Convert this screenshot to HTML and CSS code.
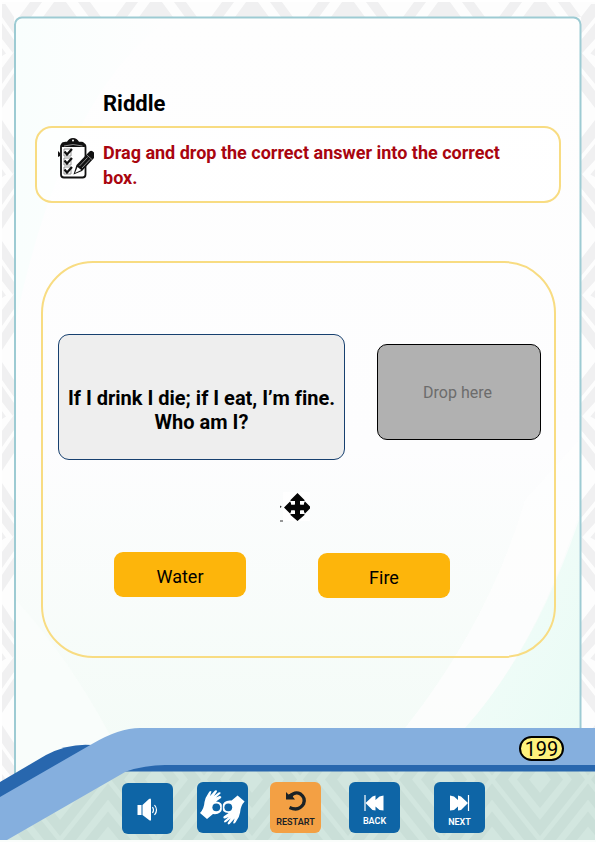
FILE: index.html
```html
<!DOCTYPE html>
<html lang="en">
<head>
<meta charset="utf-8">
<title>Riddle</title>
<link rel="stylesheet" href="styles.css">
</head>
<body>
<div class="page">
  <svg class="backdrop" viewBox="0 0 596 842" aria-hidden="true">
    <defs>
      <pattern id="weaveTop" width="96" height="16" patternUnits="userSpaceOnUse" x="12" y="2">
        <path fill="#f0f0f1" d="M42 0H54L65 15H31ZM66 0H78L89 15H77ZM30 0H18L7 15H19Z"/>
      </pattern>
      <pattern id="weaveSide" width="12" height="121" patternUnits="userSpaceOnUse" x="2" y="-7">
        <path id="chevrons" fill="#f0f0f1" d="M0 6L12 24V41L0 24ZM0 30L12 47V58L11 60L0 46ZM0 55L4 60.500L0 63ZM0 75L12 59V74L0 91ZM0 98L12 80V97L0 115Z"/>
      </pattern>
      <pattern id="weaveSideRight" width="14" height="121" patternUnits="userSpaceOnUse" x="581" y="-7">
        <use href="#chevrons" transform="translate(14 0) scale(-1.160 1)"/>
      </pattern>
      <pattern id="weaveGreen" width="96" height="121" patternUnits="userSpaceOnUse" x="12" y="-7">
        <rect width="96" height="121" fill="#d2e6df"/>
        <path id="diamond" fill="#cadfd8" fill-rule="evenodd" d="M48 4L93 60.500L48 117L3 60.500ZM48 20L16 60.500L48 101L80 60.500ZM48 32L71 60.500L48 89L25 60.500ZM48 47L37 60.500L48 74L59 60.500Z"/>
        <use href="#diamond" x="-48" y="-60.500"/>
        <use href="#diamond" x="48" y="-60.500"/>
        <use href="#diamond" x="-48" y="60.500"/>
        <use href="#diamond" x="48" y="60.500"/>
      </pattern>
      <linearGradient id="sheet" x1="0" y1="0" x2="0" y2="1">
        <stop offset="0" stop-color="#fefefe"/>
        <stop offset=".55" stop-color="#fdfdfe"/>
        <stop offset="1" stop-color="#f2fbf6"/>
      </linearGradient>
      <linearGradient id="mint" x1="0" y1="0" x2="1" y2="1">
        <stop offset="0" stop-color="#f5fdfa"/>
        <stop offset="1" stop-color="#e9fbf5"/>
      </linearGradient>
      <linearGradient id="corner" x1="0" y1="0" x2="1" y2="0">
        <stop offset="0" stop-color="#f9fefd"/>
        <stop offset="1" stop-color="#fefefe"/>
      </linearGradient>
    </defs>
    <rect width="596" height="842" fill="#fff"/>
    <rect x="2" y="2" width="593" height="838" fill="#fdfdfd"/>
    <rect x="12" y="2" width="583" height="15" fill="url(#weaveTop)"/>
    <rect x="2" y="4" width="12" height="790" fill="url(#weaveSide)"/>
    <rect x="581" y="4" width="14" height="750" fill="url(#weaveSideRight)"/>
    <rect x="15" y="17.500" width="565" height="780" rx="7" fill="url(#sheet)"/>
    <path d="M16 25Q16 19 22 19H170Q65 90 16 320Z" fill="url(#corner)"/>
    <path d="M579 520Q535 650 465 728H579Z" fill="url(#mint)"/>
    <path d="M525 500Q490 620 405 728H465Q535 650 579 515V440Z" fill="#fdfefe" opacity=".75"/>
    <path d="M16 600Q70 660 110 735L16 790Z" fill="#fbfefc" opacity=".7"/>
    <rect x="15" y="17.500" width="565.500" height="780" rx="7" fill="none" stroke="#9dcbd3" stroke-width="2"/>
    <path d="M0 840V790L110 740L595 760V840Z" fill="url(#weaveGreen)"/>
    <path d="M0 782L46 755Q69 743 92 745L110 760L0 820Z" fill="#2867ae"/>
    <path d="M110 771.500H595V760H150Z" fill="#2867ae"/>
    <path d="M0 797L92 744Q119 728 140 728H595V765H165Q145 765 126 771.500L7 840H0Z" fill="#85afde"/>
    <path d="M0 840H596V842H0Z" fill="#fafdfb"/>
  </svg>

  <main class="content">
    <h1 class="title">Riddle</h1>
    <section class="instruction">
      <svg class="checklist" viewBox="0 0 38 42" aria-hidden="true">
        <rect x="3" y="6" width="24.500" height="33.500" rx="3" fill="#fff" stroke="#111" stroke-width="1.800"/>
        <path d="M3.500 9V5.500Q4 3.800 7.500 3.800H9Q11 0 15 0T21 3.800H23.500Q27 3.800 27 9Z" fill="#111"/>
        <circle cx="15" cy="2.500" r="1" fill="#fff"/>
        <path d="M6 8Q15 5 24.500 8" fill="none" stroke="#aaa" stroke-width=".8"/>
        <path d="M0 13L2 15V18L0 19Z" fill="#111"/>
        <path d="M6 11H13V18H6ZM6 20H13V27H6ZM6 29H13V36H6Z" fill="none" stroke="#888" stroke-width=".9"/>
        <path d="M6.500 13.500L9 16.500L14 11M6.500 22.500L9 25.500L14 20M6.500 31.500L9 34.500L14 29" fill="none" stroke="#111" stroke-width="2.200"/>
        <path d="M15.500 36.500L18.500 27L30.500 14.500Q33 11 36 14.500V20L24 33Z" fill="#111"/>
        <path d="M17 35L19.500 29L23.300 32Z" fill="#fff"/>
        <path d="M21.500 28L29.500 19.500M24 30L32 21.500M28.800 17L34 21.500" stroke="#ddd" stroke-width=".6"/>
      </svg>
      <p class="instruction-text">Drag and drop the correct answer into the correct<br>box.</p>
    </section>

    <section class="board">
      <div class="row">
        <div class="question"><p>If I drink I die; if I eat, I’m fine.<br>Who am I?</p></div>
        <div class="drop">Drop here</div>
      </div>
      <svg class="move" viewBox="0 0 32 32" aria-hidden="true">
        <path d="M3 0H30V29H3Z" fill="#fff"/>
        <path d="M17.500 1L24.500 8V9H20V12.500H24V8.500L30 14.500V16.500L24 22.500V18.500H20V22H24.500V23L17.500 29L10.500 23V22H15V18.500H11V22.500L4 15.500L11 8.500V12.500H15V9H10.500V8Z" fill="#050505"/>
        <path d="M10 9H14.500V12.500H11.500ZM20.500 9H25L23.500 12.500H20.500ZM11.500 18.500H14.500V22H10ZM20.500 18.500H23.500L25 22H20.500Z" fill="#fff"/>
        <path d="M0 13.500L1.800 14.700L0 16ZM0 28.500H3V29.500H0Z" fill="#333"/>
      </svg>
      <div class="answers">
        <button class="answer">Water</button>
        <button class="answer answer-low">Fire</button>
      </div>
    </section>
  </main>

  <div class="page-line"><span class="page-number">199</span></div>

  <nav class="toolbar">
    <button class="tool tool-sound" aria-label="Sound">
      <svg viewBox="0 0 51 51"><path d="M15.500 22H19.500V32H15.500ZM20.500 22L27 16Q29 14.500 29 17V36.500Q29 38.500 27 37L20.500 32Z" fill="#fff"/><path d="M30.500 24Q32.500 27 30.500 30M32.500 22Q36.500 27 32.500 32" fill="none" stroke="#fff" stroke-width="1.200"/></svg>
    </button>
    <button class="tool tool-sign" aria-label="Sign language">
      <svg viewBox="0 0 51 51">
        <g id="hand">
          <path d="M3 31Q7 27 7.500 20Q8 16 11.500 11Q13 8 14.500 9.500L13 14L18 8.500Q20 7.500 20 9.500L17 14L21.500 10.500Q24 9.500 23.500 11.500L19 15.500L22.500 14Q25 14 24 16L19 19.500Q26 20 25.500 26Q24 33 16 32L10 37Z" fill="#fff"/>
          <circle cx="19.300" cy="25.300" r="3.900" fill="#0e65a6"/>
        </g>
        <use href="#hand" transform="rotate(180 25.300 25.300)"/>
        <path d="M25.300 18V32" stroke="#0e65a6" stroke-width="1"/>
      </svg>
    </button>
    <button class="tool tool-restart">
      <svg viewBox="0 0 51 51"><path d="M20.500 14Q25 9 30.500 12Q36 16 33.500 22Q29 29.500 19.500 25.500" fill="none" stroke="#1b2226" stroke-width="3.400"/><path d="M16 10L18.500 12.500L22 11L23 15L25 17.500H16Z" fill="#1b2226"/></svg>
      <span>RESTART</span>
    </button>
    <button class="tool tool-back">
      <svg viewBox="0 0 51 51"><path d="M16 13V29" stroke="#fff" stroke-width="1.200"/><path d="M16.500 21L23.500 14.500L26.500 13.500V18L30.500 14.500L34.500 13.500V28.500L30.500 28L26.500 24.500V28.500L23.500 28Z" fill="#fff"/></svg>
      <span>BACK</span>
    </button>
    <button class="tool tool-next">
      <svg viewBox="0 0 51 51"><path d="M34.500 13V29" stroke="#fff" stroke-width="1.200"/><path d="M34 21L27 14.500L24 13.500V18L20 14.500L16 13.500V28.500L20 28L24 24.500V28.500L27 28Z" fill="#fff"/></svg>
      <span>NEXT</span>
    </button>
  </nav>
</div>
</body>
</html>
```
FILE: styles.css
```css
* { box-sizing: border-box; }
body { margin: 0; background: #fff; font-family: Roboto, "Liberation Sans", sans-serif; font-variant-ligatures: none; color: #000; }
h1, p { margin: 0; }
button { border: 0; padding: 0; font-family: inherit; }

.page { position: relative; width: 596px; height: 842px; overflow: hidden; display: flex; flex-direction: column; }
.backdrop { position: absolute; inset: 0; width: 596px; height: 842px; }
.content { position: relative; height: 728px; padding: 90px 40px 0 35px; display: flex; flex-direction: column; }

.title { margin-left: 68px; height: 36px; font-size: 22px; line-height: 27px; font-weight: 700; }
.instruction { width: 526px; height: 77px; padding: 11px 0 0 21px; display: flex; align-items: flex-start; border: 2px solid #f8dc82; border-radius: 17px; background: rgba(255, 255, 255, .5); }
.checklist { width: 38px; height: 42px; margin-top: -1px; }
.instruction-text { margin-left: 7px; margin-top: 1px; color: #a9050f; font-size: 18px; line-height: 25px; font-weight: 700; white-space: nowrap; }

.board { width: 515px; height: 397px; margin: 58px 0 0 6px; padding: 71px 13px 0 15px; display: flex; flex-direction: column; border: 2px solid #f8dc82; border-radius: 52px; }
.row { display: flex; justify-content: space-between; align-items: flex-start; }
.question { width: 287px; height: 126px; padding-top: 51px; border: 1px solid #17406f; border-radius: 11px; background: #eeeeee; text-align: center; font-size: 20px; line-height: 24px; font-weight: 700; white-space: nowrap; }
.question p { margin: 0 -10px; }
.drop { width: 164px; height: 96px; margin-top: 10px; padding-right: 3px; border: 1px solid #000; border-radius: 10px; background: #b1b1b1; color: #6c6c6c; display: flex; align-items: center; justify-content: center; font-size: 16px; }
.move { width: 32px; height: 32px; margin: 32px 0 0 222px; }
.answers { display: flex; gap: 72px; margin: 28px 0 0 56px; }
.answer { width: 132px; height: 45px; padding-top: 4px; border-radius: 9px; background: #fdb50b; color: #000; font-size: 18px; }
.answer-low { margin-top: 1px; }

.page-line { position: relative; height: 37px; padding: 8px 32px 0 0; display: flex; justify-content: flex-end; }
.page-number { width: 45px; height: 25px; border: 2px solid #000; border-radius: 13px; background: #fff27d; font-size: 20px; line-height: 22px; text-align: center; }
.toolbar { position: relative; padding: 17px 0 0 122px; display: flex; align-items: flex-start; }
.tool { width: 51px; height: 51px; border-radius: 6px; background: #0e65a6; color: #fff; display: grid; font-size: 9px; overflow: hidden; }
.tool svg, .tool span { grid-area: 1 / 1; }
.tool svg { width: 51px; height: 51px; }
.tool span { align-self: end; justify-self: center; line-height: 11px; margin-bottom: 5px; font-weight: 600; }
.tool-sound { margin-top: 1px; }
.tool-sign { margin-left: 24px; }
.tool-restart { margin-left: 22px; background: #f3a044; color: #1b2226; }
.tool-back { margin-left: 28px; }
.tool-back span { margin-bottom: 6px; }
.tool-next { margin-left: 34px; }
```
